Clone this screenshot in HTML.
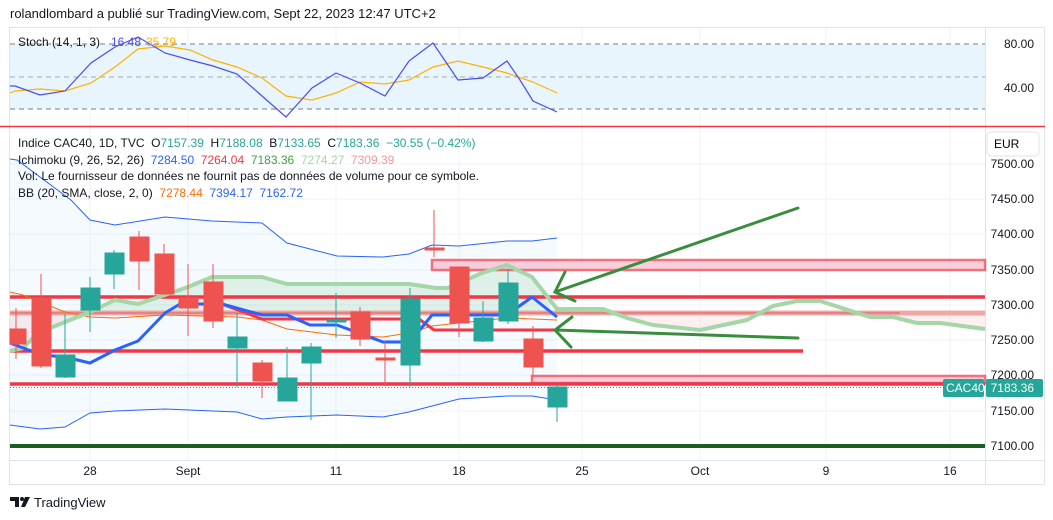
<!DOCTYPE html>
<html><head><meta charset="utf-8"><style>
body{margin:0;width:1053px;height:520px;background:#fff;overflow:hidden;font-family:"Liberation Sans",sans-serif;color:#131722}
svg{position:absolute;left:0;top:0}
.pre{white-space:pre}
</style></head><body>
<svg width="1053" height="520" xmlns="http://www.w3.org/2000/svg" font-family="Liberation Sans, sans-serif">
<text x="10" y="18" font-size="13" fill="#131722">rolandlombard a publié sur TradingView.com, Sept 22, 2023 12:47 UTC+2</text>
<rect x="9.5" y="27.5" width="1035" height="457" fill="none" stroke="#e0e3eb"/>
<line x1="985.5" y1="27" x2="985.5" y2="485" stroke="#e0e3eb"/>
<line x1="9" y1="460.5" x2="1045" y2="460.5" stroke="#e0e3eb"/>
<g stroke="#f0f3fa">
<line x1="90" y1="28" x2="90" y2="460"/><line x1="188" y1="28" x2="188" y2="460"/><line x1="336" y1="28" x2="336" y2="460"/><line x1="459" y1="28" x2="459" y2="460"/><line x1="582" y1="28" x2="582" y2="460"/><line x1="700" y1="28" x2="700" y2="460"/><line x1="826" y1="28" x2="826" y2="460"/><line x1="950" y1="28" x2="950" y2="460"/>
<line x1="10" y1="164" x2="985" y2="164"/><line x1="10" y1="199" x2="985" y2="199"/><line x1="10" y1="234" x2="985" y2="234"/><line x1="10" y1="270" x2="985" y2="270"/><line x1="10" y1="305" x2="985" y2="305"/><line x1="10" y1="340" x2="985" y2="340"/><line x1="10" y1="375" x2="985" y2="375"/><line x1="10" y1="411" x2="985" y2="411"/>
</g>
<rect x="10" y="44" width="975" height="65" fill="#e3f2fd" opacity="0.8"/>
<g stroke="#787b86" stroke-dasharray="5,4" stroke-width="1"><line x1="10" y1="44" x2="985" y2="44"/><line x1="10" y1="77" x2="985" y2="77" opacity="0.6"/><line x1="10" y1="109" x2="985" y2="109"/></g>
<polyline fill="none" stroke="#ffb300" stroke-width="1.2" points="10,93 15,91 40,89 65,91 91,83 115,67 138,49 165,46 190,50 213,60 237,67 262,78 286,96 312,100 336,93 360,82 385,84 409,80 433,67 458,61 483,67 507,73 533,82 557,93"/>
<polyline fill="none" stroke="#4b4bf5" stroke-width="1.2" points="10,86 15,86 40,95 65,91 91,63 115,47 138,37 165,53 190,60 213,66 237,74 262,96 286,117 312,88 336,73 360,83 385,96 409,61 433,43 458,80 483,78 507,61 520,80 533,101 557,112"/>
<text x="18" y="46" font-size="12" fill="#131722">Stoch (14, 1, 3)</text>
<text x="111" y="46" font-size="12" fill="#4b4bf5">16.48</text>
<text x="146" y="46" font-size="12" fill="#ffb300">35.79</text>
<line x1="0" y1="126.5" x2="1045" y2="126.5" stroke="#f23645" stroke-width="1.5"/>
<polygon fill="#2196f3" opacity="0.05" points="10,159 17,160 71,200 90,220 115,225 165,217 212,221 262,223 287,243 337,256 383,257 409,254 432,245 459,246 507,241 532,241 557,238 557,400 532,396 507,396 459,399 409,412 383,417 337,415 287,417 262,419 237,412 165,409 115,411 90,413 65,427 40,429 10,425"/>
<polygon fill="#4caf50" opacity="0.12" points="65,322 90,312 115,300 138,304 165,295 188,287 212,277 262,277 287,284 409,284 436,288 448,288 482,273 507,265 532,277 550,300 550,313 65,313"/>
<polygon fill="#f23645" opacity="0.08" points="10,351 23,348 38,333 65,322 65,313 10,313"/>
<polygon fill="#f23645" opacity="0.08" points="603,309 627,318 653,325 700,330 747,320 773,313 870,317 893,317 917,323 940,323 985,329 985,313 603,313"/>
<rect x="432" y="260" width="553" height="10" fill="#f8bbd0" opacity="0.7" stroke="#f23645" stroke-width="2.5"/>
<rect x="532" y="376" width="453" height="7" fill="#f8bbd0" opacity="0.7" stroke="#f23645" stroke-width="2.5"/>
<line x1="10" y1="313" x2="985" y2="313" stroke="#ef9a9a" stroke-width="5" opacity="0.85"/>
<line x1="10" y1="313" x2="900" y2="313" stroke="#e57373" stroke-width="2" opacity="0.7"/>
<line x1="10" y1="297" x2="985" y2="297" stroke="#f23645" stroke-width="3.5"/>
<line x1="10" y1="351" x2="803" y2="351" stroke="#f23645" stroke-width="3.5"/>
<line x1="10" y1="384" x2="985" y2="384" stroke="#f23645" stroke-width="3.5"/>
<line x1="10" y1="446" x2="985" y2="446" stroke="#1b5e20" stroke-width="4"/>
<line x1="10" y1="387.5" x2="985" y2="387.5" stroke="#26a69a" stroke-dasharray="1,2"/>
<polyline fill="none" stroke="#2962ff" stroke-width="1" points="10,159 17,160 71,200 90,220 115,225 165,217 212,221 262,223 287,243 337,256 383,257 409,254 432,245 459,246 507,241 532,241 557,238"/>
<polyline fill="none" stroke="#2962ff" stroke-width="1" points="10,425 40,429 65,427 90,413 115,411 165,409 237,412 262,419 287,417 337,415 383,417 409,412 459,399 507,396 532,396 557,400"/>
<polyline fill="none" stroke="#ff6d00" stroke-width="1" points="10,292 23,295 65,312 90,317 115,318 165,315 237,317 262,320 287,329 337,335 383,337 409,333 432,326 459,323 507,318 557,320"/>
<polyline fill="none" stroke="#a5d6a7" stroke-width="4" stroke-linejoin="round" points="10,351 23,348 38,333 65,322 90,312 115,300 138,304 165,295 188,287 212,277 262,277 287,284 409,284 436,288 448,288 482,273 507,265 532,277 557,309 603,309 627,318 653,325 700,330 747,320 773,306 797,301 820,301 870,317 893,317 917,323 940,323 985,329"/>
<polyline fill="none" stroke="#f23645" stroke-width="3" points="180,304 222,304 262,319 419,319 434,330 555,330"/>
<polyline fill="none" stroke="#2962ff" stroke-width="3" stroke-linejoin="round" points="10,343 42,355 65,357 90,363 115,350 138,341 165,313 180,304 222,304 262,315 287,315 310,325 337,325 383,342 410,342 432,315 507,315 532,297 557,317"/>
<g stroke-width="1">
<g fill="#ef5350" stroke="#ef5350">
<line x1="16" y1="308" x2="16" y2="359"/><rect x="10" y="329" width="16" height="15"/>
<line x1="41" y1="274" x2="41" y2="368"/><rect x="32" y="298" width="19" height="68"/>
<line x1="139" y1="231" x2="139" y2="290"/><rect x="130" y="237" width="19" height="24"/>
<line x1="164" y1="244" x2="164" y2="294"/><rect x="155" y="254" width="19" height="40"/>
<line x1="188" y1="264" x2="188" y2="336"/><rect x="179" y="298" width="19" height="10"/>
<line x1="213" y1="264" x2="213" y2="328"/><rect x="204" y="282" width="19" height="39"/>
<line x1="262" y1="360" x2="262" y2="398"/><rect x="253" y="363" width="19" height="18"/>
<line x1="360" y1="307" x2="360" y2="346"/><rect x="351" y="312" width="19" height="27"/>
<line x1="385" y1="341" x2="385" y2="386"/><rect x="376" y="358" width="19" height="2"/>
<line x1="434" y1="210" x2="434" y2="257"/><rect x="425" y="248" width="19" height="2"/>
<line x1="459" y1="267" x2="459" y2="337"/><rect x="450" y="267" width="19" height="56"/>
<line x1="533" y1="326" x2="533" y2="377"/><rect x="524" y="339" width="19" height="28"/>
</g>
<g fill="#26a69a" stroke="#26a69a">
<line x1="65" y1="314" x2="65" y2="378"/><rect x="56" y="355" width="19" height="22"/>
<line x1="90" y1="277" x2="90" y2="332"/><rect x="81" y="288" width="19" height="22"/>
<line x1="114" y1="250" x2="114" y2="289"/><rect x="105" y="253" width="19" height="21"/>
<line x1="237" y1="313" x2="237" y2="387"/><rect x="228" y="337" width="19" height="11"/>
<line x1="287" y1="347" x2="287" y2="401"/><rect x="278" y="378" width="19" height="23"/>
<line x1="311" y1="343" x2="311" y2="420"/><rect x="302" y="347" width="19" height="16"/>
<line x1="336" y1="293" x2="336" y2="338"/><rect x="327" y="320" width="19" height="2"/>
<line x1="410" y1="288" x2="410" y2="387"/><rect x="401" y="299" width="19" height="66"/>
<line x1="483" y1="301" x2="483" y2="342"/><rect x="474" y="318" width="19" height="23"/>
<line x1="508" y1="269" x2="508" y2="324"/><rect x="499" y="283" width="19" height="38"/>
<line x1="557" y1="384" x2="557" y2="422"/><rect x="548" y="387" width="19" height="20"/>
</g></g>
<g stroke="#388e3c" stroke-width="3" fill="none" stroke-linecap="round">
<line x1="555" y1="292" x2="798" y2="208"/><polyline points="565,272 555,292 575,301"/>
<line x1="555" y1="330" x2="798" y2="338"/><polyline points="572,317 555,330 571,347"/>
</g>
<g font-size="12" class="pre">
<text x="18" y="147" class="pre"><tspan fill="#131722">Indice CAC40, 1D, TVC  O</tspan><tspan fill="#26a69a">7157.39</tspan><tspan fill="#131722">  H</tspan><tspan fill="#26a69a">7188.08</tspan><tspan fill="#131722">  B</tspan><tspan fill="#26a69a">7133.65</tspan><tspan fill="#131722">  C</tspan><tspan fill="#26a69a">7183.36  −30.55 (−0.42%)</tspan></text>
<text x="18" y="164" class="pre"><tspan fill="#131722">Ichimoku (9, 26, 52, 26)  </tspan><tspan fill="#2962ff">7284.50  </tspan><tspan fill="#f23645">7264.04  </tspan><tspan fill="#43a047">7183.36  </tspan><tspan fill="#a5d6a7">7274.27  </tspan><tspan fill="#ef9a9a">7309.39</tspan></text>
<text x="18" y="180" fill="#131722">Vol: Le fournisseur de données ne fournit pas de données de volume pour ce symbole.</text>
<text x="18" y="197" class="pre"><tspan fill="#131722">BB (20, SMA, close, 2, 0)  </tspan><tspan fill="#ff6d00">7278.44  </tspan><tspan fill="#2962ff">7394.17  </tspan><tspan fill="#2962ff">7162.72</tspan></text>
</g>
<rect x="987" y="132" width="52" height="24" rx="4" fill="#fff" stroke="#e0e3eb"/>
<text x="994" y="148" font-size="12">EUR</text>
<g font-size="12" text-anchor="end" fill="#131722">
<text x="1034" y="48">80.00</text><text x="1034" y="92">40.00</text>
<text x="1034" y="168">7500.00</text><text x="1034" y="203">7450.00</text><text x="1034" y="238">7400.00</text><text x="1034" y="274">7350.00</text><text x="1034" y="309">7300.00</text><text x="1034" y="344">7250.00</text><text x="1034" y="379">7200.00</text><text x="1034" y="450">7100.00</text><text x="1034" y="415">7150.00</text>
</g>
<rect x="943" y="379" width="41" height="18" rx="2" fill="#26a69a"/>
<rect x="986" y="379" width="57" height="18" rx="2" fill="#26a69a"/>
<text x="946" y="392" font-size="12" fill="#fff">CAC40</text>
<text x="1034" y="392" font-size="12" fill="#fff" text-anchor="end">7183.36</text>
<g font-size="12" text-anchor="middle" fill="#131722">
<text x="90" y="475">28</text><text x="188" y="475">Sept</text><text x="336" y="475">11</text><text x="459" y="475">18</text><text x="582" y="475">25</text><text x="700" y="475">Oct</text><text x="826" y="475">9</text><text x="950" y="475">16</text>
</g>
<g fill="#131722"><path d="M10,497h9v10h-4v-6h-5z"/><circle cx="22" cy="499" r="2"/><path d="M25,497h5l-5,10h-4z"/></g>
<text x="34" y="507" font-size="13" fill="#131722">TradingView</text>
</svg>
</body></html>
